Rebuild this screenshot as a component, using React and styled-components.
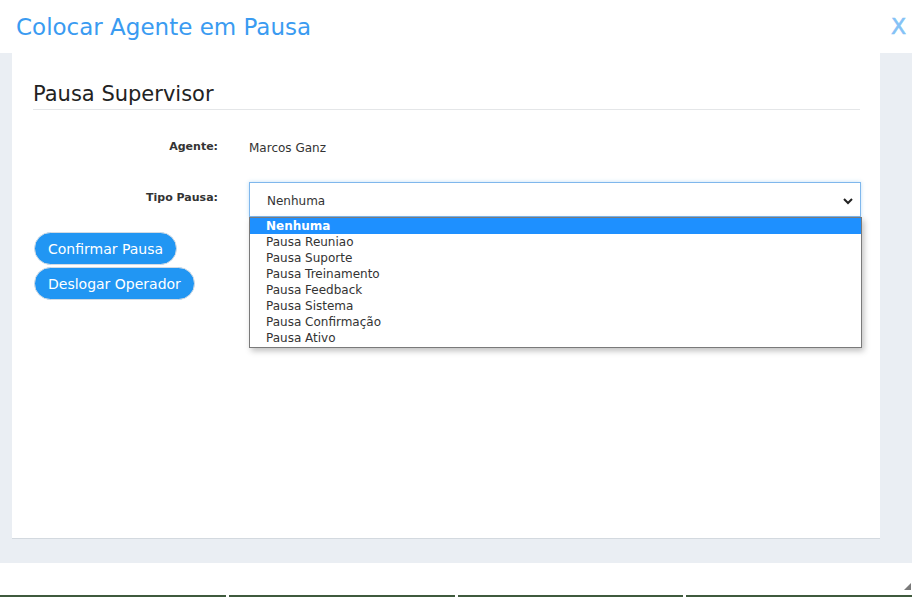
import React from 'react';
import styled, { createGlobalStyle } from 'styled-components';

const GlobalStyle = createGlobalStyle`
  html, body {
    margin: 0;
    padding: 0;
    background: #ffffff;
    font-family: "DejaVu Sans", Verdana, sans-serif;
  }
`;

const StyledPage = styled.div`
  display: flex;
  flex-direction: column;
  width: 912px;
  height: 597px;
  overflow: hidden;
`;

const StyledHeader = styled.div`
  display: flex;
  align-items: center;
  justify-content: space-between;
  height: 53px;
  padding: 0 6px 0 16px;
  box-sizing: border-box;
`;

const StyledTitle = styled.h1`
  margin: 0;
  font-size: 23px;
  font-weight: normal;
  color: #3a9bf1;
`;

const StyledClose = styled.span`
  font-size: 22px;
  color: #84c2f6;
  -webkit-text-stroke: 0.6px #84c2f6;
  cursor: pointer;
`;

const StyledBody = styled.div`
  height: 510px;
  padding: 0 32px 25px 12px;
  box-sizing: border-box;
  background-color: #eaeef3;
`;

const StyledCard = styled.div`
  height: 100%;
  padding: 29px 20px 0;
  box-sizing: border-box;
  background: #ffffff;
  box-shadow: 0 1px 0 #d3d9df;
`;

const StyledHeading = styled.h2`
  margin: 0 0 0 1px;
  padding-bottom: 3px;
  font-size: 21px;
  font-weight: normal;
  color: #222222;
  border-bottom: 1px solid #e4e6e8;
`;

const StyledRow = styled.div`
  display: grid;
  grid-template-columns: 186px 1fr;
  column-gap: 31px;
  align-items: ${(p) => p.$align || 'center'};
  margin-top: ${(p) => p.$top}px;
`;

const StyledLabel = styled.label`
  text-align: right;
  font-size: 11px;
  font-weight: bold;
  color: #333333;
  padding-top: ${(p) => p.$pad || 0}px;
`;

const StyledValue = styled.span`
  font-size: 12px;
  color: #333333;
  padding-top: 4px;
`;

const StyledSelectWrap = styled.div`
  position: relative;
  margin-right: -1px;
`;

const StyledSelect = styled.div`
  display: flex;
  align-items: center;
  justify-content: space-between;
  height: 35px;
  padding: 2px 6px 0 17px;
  box-sizing: border-box;
  border: 1px solid #7fb7ec;
  box-shadow: 0 0 4px rgba(102, 175, 233, 0.4);
  font-size: 12px;
  color: #333333;
  background: #ffffff;
`;

const StyledList = styled.ul`
  position: absolute;
  top: 35px;
  left: 0;
  right: -1px;
  margin: 0;
  padding: 0 0 1px;
  list-style: none;
  background: #ffffff;
  border: 1px solid #7a7a7a;
  box-shadow: 2px 3px 6px rgba(0, 0, 0, 0.25);
  z-index: 2;
`;

const StyledOption = styled.li`
  height: 16px;
  line-height: 16px;
  padding-left: 16px;
  font-size: 12px;
  color: ${(p) => (p.$active ? '#ffffff' : '#333333')};
  font-weight: ${(p) => (p.$active ? 'bold' : 'normal')};
  background: ${(p) => (p.$active ? '#1e90ff' : 'transparent')};
`;

const StyledButtons = styled.div`
  display: flex;
  flex-direction: column;
  align-items: flex-start;
  gap: 2px;
  margin-top: 15px;
  margin-left: 2px;
`;

const StyledButton = styled.button`
  height: 33px;
  padding: 0 13px;
  border: 1px solid #d3dbe3;
  border-radius: 17px;
  background: #2196f3;
  color: #ffffff;
  font-family: "DejaVu Sans", Verdana, sans-serif;
  font-size: 14px;
  cursor: pointer;
`;

const StyledFooter = styled.div`
  flex: 1;
  position: relative;
  display: flex;
  align-items: flex-end;
  gap: 3px;
`;

const StyledTab = styled.div`
  flex: 1;
  height: 2px;
  background: #3f5a3d;
`;

const StyledGrip = styled.svg`
  position: absolute;
  right: 1px;
  bottom: 7px;
`;

const options = [
    'Nenhuma',
    'Pausa Reuniao',
    'Pausa Suporte',
    'Pausa Treinamento',
    'Pausa Feedback',
    'Pausa Sistema',
    'Pausa Confirmação',
    'Pausa Ativo',
];

const App = () => {
    return <React.Fragment>
        <GlobalStyle />
        <StyledPage>
            <StyledHeader>
                <StyledTitle>Colocar Agente em Pausa</StyledTitle>
                <StyledClose>X</StyledClose>
            </StyledHeader>

            <StyledBody>
                <StyledCard>
                    <StyledHeading>Pausa Supervisor</StyledHeading>

                    <StyledRow $top={27}>
                        <StyledLabel>Agente:</StyledLabel>
                        <StyledValue>Marcos Ganz</StyledValue>
                    </StyledRow>

                    <StyledRow $top={27} $align="start">
                        <StyledLabel $pad={9}>Tipo Pausa:</StyledLabel>
                        <StyledSelectWrap>
                            <StyledSelect>
                                <span>Nenhuma</span>
                                <svg width="12" height="12" viewBox="0 0 12 12">
                                    <path d="M2 4 L6 8 L10 4" fill="none" stroke="#222" strokeWidth="2" />
                                </svg>
                            </StyledSelect>
                            <StyledList>
                                {options.map((o, i) => (
                                    <StyledOption key={o} $active={i === 0}>{o}</StyledOption>
                                ))}
                            </StyledList>
                        </StyledSelectWrap>
                    </StyledRow>

                    <StyledButtons>
                        <StyledButton>Confirmar Pausa</StyledButton>
                        <StyledButton>Deslogar Operador</StyledButton>
                    </StyledButtons>
                </StyledCard>
            </StyledBody>

            <StyledFooter>
                <StyledTab />
                <StyledTab />
                <StyledTab />
                <StyledTab />
                <StyledGrip width="7" height="7" viewBox="0 0 7 7">
                    <path d="M7 0 L7 7 L0 7 Z" fill="#7a7a7a" />
                </StyledGrip>
            </StyledFooter>
        </StyledPage>
    </React.Fragment>
}

export default App;
